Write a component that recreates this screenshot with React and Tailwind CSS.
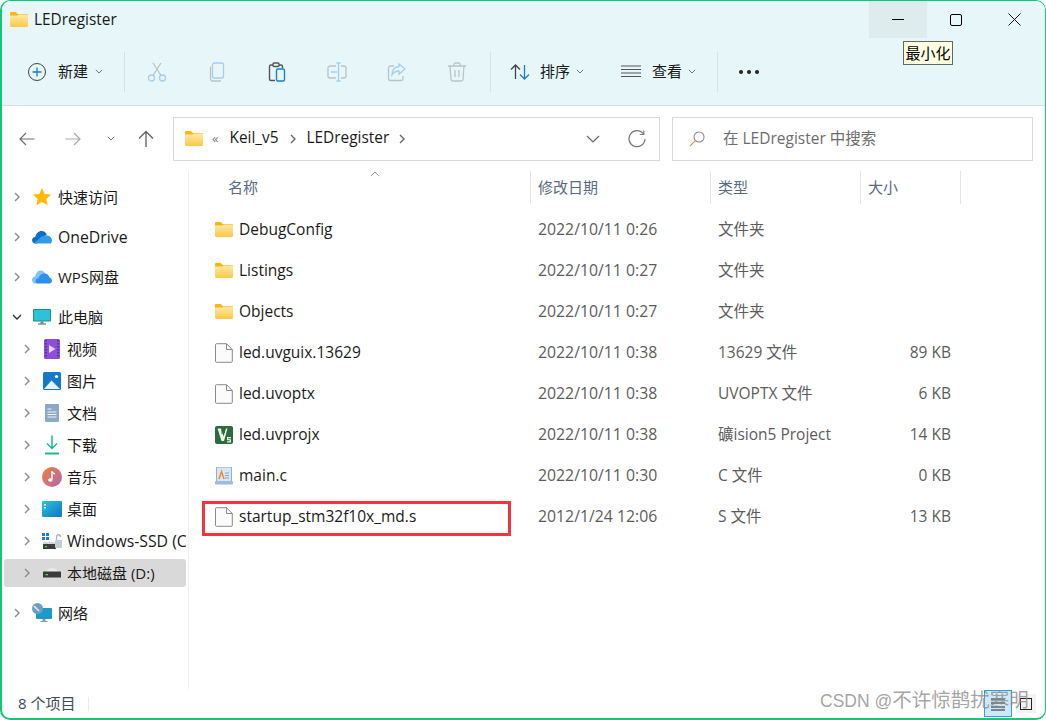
const FONT = "font-['Open_Sans','Noto_Sans_CJK_SC',sans-serif]";

function FolderIcon({ className = "w-[18px] h-[15px]" }) {
  return (
    <svg viewBox="0 0 18 15" className={className}>
      <defs>
        <linearGradient id="folderBody" x1="0" y1="0" x2="0" y2="1">
          <stop offset="0" stopColor="#ffe9a6" />
          <stop offset="1" stopColor="#fbc847" />
        </linearGradient>
      </defs>
      <path d="M0 1.200C0 .5.5 0 1.200 0h4.600l2 2H18v3H0z" fill="#fdb515" />
      <path d="M0 3.600h7.200L9 2.600h9v11.200c0 .7-.5 1.200-1.200 1.200H1.200C.5 15 0 14.500 0 13.800z" fill="url(#folderBody)" />
    </svg>
  );
}

function FileIcon() {
  return (
    <svg viewBox="0 0 18 20" className="w-[18px] h-[20px]">
      <path d="M1.500 .7h10l5.800 5.800v11.800c0 .6-.4 1-1 1H1.500c-.6 0-1-.4-1-1V1.700c0-.6.4-1 1-1z" fill="#fbfbfb" stroke="#8a8a8a" />
      <path d="M11.500 .7v5.800h5.800" fill="none" stroke="#8a8a8a" />
    </svg>
  );
}

function KeilIcon() {
  return (
    <svg viewBox="0 0 18 18" className="w-[18px] h-[18px]">
      <rect width="18" height="18" rx="2" fill="#2e6b3c" />
      <path d="M2.500 2.500h3.500l2.500 8 2.500-8h1.500l-3.500 12.500H6.500z" fill="#eef5e8" />
      <path d="M7 3v5M9.500 3v4" stroke="#2e6b3c" strokeWidth="1" />
      <path d="M12 11h4v1.200h-2.800v1h2.800v3.300h-4v-1.200h2.800v-1H12z" fill="#eef5e8" />
    </svg>
  );
}

function CFileIcon() {
  return (
    <svg viewBox="0 0 18 18" className="w-[18px] h-[18px]">
      <rect x="1.500" y="0" width="15" height="15" fill="#d7e6f5" stroke="#8fb0d2" />
      <rect x="0" y="14" width="18" height="3.500" rx="1" fill="#9fbcdc" />
      <path d="M4 12L6.500 4.500 9 12" fill="none" stroke="#f08a2c" strokeWidth="1.500" />
      <path d="M10 6h4M10 8.500h4M10 11h4" stroke="#89a7c7" />
    </svg>
  );
}

function Chevron({ open, dim }) {
  return (
    <svg viewBox="0 0 10 10" className="w-[10px] h-[10px]">
      <path
        d={open ? "M1 3l4 4 4-4" : "M3 1l4 4-4 4"}
        fill="none"
        stroke={open ? "#333" : dim || "#8a8a8a"}
        strokeWidth="1.400"
      />
    </svg>
  );
}

function SmallChevron() {
  return (
    <svg viewBox="0 0 8 5" className="w-[8px] h-[5px]">
      <path d="M.8.8L4 4 7.200.8" fill="none" stroke="#777" />
    </svg>
  );
}

function Stroke({ w = 20, h = 20, vb = "0 0 20 20", children }) {
  return (
    <svg viewBox={vb} style={{ width: w, height: h }} fill="none">
      {children}
    </svg>
  );
}

const toolbarIcons = [
  <Stroke key="cut">
    <circle cx="4.500" cy="16" r="3" stroke="#a6cdea" strokeWidth="1.300" />
    <circle cx="15.500" cy="16" r="3" stroke="#a6cdea" strokeWidth="1.300" />
    <path d="M6 13.500L14 1M14 13.500L6 1" stroke="#b9c4c8" strokeWidth="1.300" />
  </Stroke>,
  <Stroke key="copy">
    <rect x="5.500" y="1" width="11" height="15" rx="2" stroke="#a6cdea" strokeWidth="1.300" />
    <path d="M3.500 4.500v12c0 1.500 1 2.500 2.500 2.500h8" stroke="#b9c4c8" strokeWidth="1.300" />
  </Stroke>,
  <Stroke key="paste">
    <path d="M8 18.500H4c-1 0-1.500-.6-1.500-1.500V4.500c0-1 .6-1.500 1.500-1.500h10c1 0 1.500.6 1.500 1.500V6" stroke="#555" strokeWidth="1.400" />
    <rect x="6" y="1" width="6" height="3.500" rx="1" fill="#e7f6f8" stroke="#555" strokeWidth="1.400" />
    <rect x="9.500" y="7" width="8" height="12" rx="1.500" fill="#e7f6f8" stroke="#1a7fd4" strokeWidth="1.400" />
  </Stroke>,
  <Stroke key="rename">
    <path d="M9 4H3C2 4 1 5 1 6v8c0 1 1 2 2 2h6M14 4h3c1 0 2 1 2 2v8c0 1-1 2-2 2h-3" stroke="#b9c4c8" strokeWidth="1.300" />
    <path d="M4 10h6" stroke="#a6cdea" strokeWidth="1.600" />
    <path d="M11.500 1v18M9.500 1h4M9.500 19h4" stroke="#a6cdea" strokeWidth="1.300" />
  </Stroke>,
  <Stroke key="share">
    <path d="M7 4H3.500C2.500 4 1.500 5 1.500 6v10.500c0 1 1 2 2 2H14c1 0 2-1 2-2V14" stroke="#b9c4c8" strokeWidth="1.300" />
    <path d="M12 2l6 5-6 5V9C8.500 9 6.500 10.500 5 13c0-5 3-8 7-8.500z" stroke="#a6cdea" strokeWidth="1.300" />
  </Stroke>,
  <Stroke key="delete">
    <path d="M1 4h18M7 4V2.500C7 1.500 7.500 1 8.500 1h3c1 0 1.500.5 1.500 1.500V4" stroke="#b9c4c8" strokeWidth="1.300" />
    <path d="M3 4l1 13.500c0 1 1 1.500 2 1.500h8c1 0 2-.5 2-1.500L17 4" stroke="#b9c4c8" strokeWidth="1.300" />
    <path d="M8 8v7M12 8v7" stroke="#b9c4c8" strokeWidth="1.300" />
  </Stroke>,
];

const navGroups = [
  {
    items: [
      {
        label: "快速访问",
        icon: (
          <svg viewBox="0 0 20 20" className="w-5 h-5">
            <path d="M10 1l2.700 5.900 6.300.7-4.700 4.300 1.300 6.300L10 15.100l-5.600 3.100 1.300-6.300L1 7.600l6.300-.7z" fill="#ffb900" />
          </svg>
        ),
      },
    ],
  },
  {
    items: [
      {
        label: "OneDrive",
        wide: true,
        icon: (
          <svg viewBox="0 0 20 14" className="w-5 h-[14px]">
            <path d="M3.500 13.500C1.500 13.500 0 12 0 10.200 0 8.300 1.500 7 3.200 7 4 3.500 6.500 1 9.500 1c2.600 0 4.500 1.500 5.300 3.800L8 9l-3 4.500z" fill="#0f6fc6" />
            <path d="M14.500 5.500c3 0 5.500 2.200 5.500 5 0 1-.5 2-1 3H4c-1 0-1.500-.3-2-.6l7-5.900c1.500-1 3.500-1.500 5.500-1.500z" fill="#2d9be8" />
          </svg>
        ),
      },
    ],
  },
  {
    items: [
      {
        label: "WPS网盘",
        icon: (
          <svg viewBox="0 0 20 14" className="w-5 h-[14px]">
            <path d="M3.500 13.500C1.500 13.500 0 12 0 10c0-1.900 1.500-3.300 3.200-3.500C4 3 6 .5 8.500.5c2.300 0 4 1.500 4.800 3.500L6 13.500z" fill="#7ec2f7" />
            <path d="M6 13.500c-1.500 0-2.500-1-2.500-2.500S5 8.300 6.500 8.300C7 6 9.500 3.500 12.500 3.500c2.700 0 4.500 1.800 5 4 1.300.3 2.500 1.500 2.500 3 0 1.700-1.300 3-3 3z" fill="#2f8fee" />
          </svg>
        ),
      },
    ],
  },
  {
    items: [
      {
        label: "此电脑",
        open: true,
        icon: (
          <svg viewBox="0 0 18 16" className="w-[18px] h-4">
            <rect width="18" height="12.500" rx="1" fill="#1a8aa8" />
            <rect x="1" y="1" width="16" height="10.500" fill="#2cc3d8" />
            <path d="M7.500 12.500h3v2h-3z" fill="#6a8a96" />
            <path d="M5 14.500h8v1H5z" fill="#4a5a66" />
          </svg>
        ),
      },
      {
        label: "视频",
        sub: true,
        icon: (
          <svg viewBox="0 0 16 20" className="w-4 h-5">
            <rect width="16" height="20" rx="1.500" fill="#8e4fd8" />
            <path d="M2 1v18M14 1v18" stroke="#4d2a80" strokeWidth="1.500" strokeDasharray="1.500 1.500" />
            <path d="M5 6l6.500 4L5 14z" fill="#e3d2fa" />
          </svg>
        ),
      },
      {
        label: "图片",
        sub: true,
        icon: (
          <svg viewBox="0 0 18 18" className="w-[18px] h-[18px]">
            <rect width="18" height="18" rx="1.500" fill="#1678c8" />
            <circle cx="13.500" cy="4.500" r="1.600" fill="#fff" />
            <path d="M1 17l7.500-8.500L17 17z" fill="#e9f3fb" />
          </svg>
        ),
      },
      {
        label: "文档",
        sub: true,
        icon: (
          <svg viewBox="0 0 14 18" className="w-[14px] h-[18px]">
            <rect width="14" height="18" rx="1" fill="#8da8c4" />
            <path d="M2.500 5h4M2.500 8h9M2.500 10.500h9M2.500 13h9" stroke="#eef3f8" />
          </svg>
        ),
      },
      {
        label: "下载",
        sub: true,
        icon: (
          <svg viewBox="0 0 14 20" className="w-[14px] h-5">
            <path d="M7 .5v13M2 8.500l5 5 5-5" fill="none" stroke="#1bb89a" strokeWidth="1.500" />
            <path d="M0 18.500h14" stroke="#1bb89a" strokeWidth="1.800" />
          </svg>
        ),
      },
      {
        label: "音乐",
        sub: true,
        icon: (
          <svg viewBox="0 0 20 20" className="w-5 h-5">
            <defs>
              <linearGradient id="musicFill" x1="0" y1="0" x2="1" y2="1">
                <stop offset="0" stopColor="#ee7f3d" />
                <stop offset="1" stopColor="#b766b2" />
              </linearGradient>
            </defs>
            <circle cx="10" cy="10" r="10" fill="url(#musicFill)" />
            <path d="M10 4.500v8" stroke="#fff" strokeWidth="1.400" />
            <path d="M10 4.500c.5 1.500 2 2 3 2.500" fill="none" stroke="#fff" strokeWidth="1.400" />
            <ellipse cx="8.300" cy="13" rx="2.200" ry="1.800" fill="#fff" />
          </svg>
        ),
      },
      {
        label: "桌面",
        sub: true,
        icon: (
          <svg viewBox="0 0 20 16" className="w-5 h-4">
            <defs>
              <linearGradient id="deskFill" x1="0" y1="0" x2="1" y2="1">
                <stop offset="0" stopColor="#2bc4dc" />
                <stop offset="1" stopColor="#0f75c4" />
              </linearGradient>
            </defs>
            <rect width="20" height="16" rx="1" fill="url(#deskFill)" />
            <path d="M2 3h2v1.500H2zM2 6h2v1.500H2z" fill="#fff" />
          </svg>
        ),
      },
      {
        label: "Windows-SSD (C",
        sub: true,
        wide: true,
        icon: (
          <svg viewBox="0 0 20 17" className="w-5 h-[17px]">
            <path d="M0 0h3v3H0zM4 0h3v3H4zM0 4h3v3H0zM4 4h3v3H4z" fill="#1a7fd4" />
            <path d="M1 9h12v3H1z" fill="#d5d5d5" />
            <rect x="1" y="11" width="13" height="5" rx=".5" fill="#3c3c3c" />
            <path d="M3 13h2v1.200H3z" fill="#5fd35f" />
            <rect x="13" y="7" width="7" height="8" rx="1" fill="#c5ced6" />
            <path d="M14.500 7V4c0-3 4-3 4 0" fill="none" stroke="#aab5bf" strokeWidth="1.300" />
          </svg>
        ),
      },
      {
        label: "本地磁盘 (D:)",
        sub: true,
        selected: true,
        icon: (
          <svg viewBox="0 0 18 10" className="w-[18px] h-[10px]">
            <path d="M3 4C4 1 6 0 9 0s5 1 6 4z" fill="#e8e8e8" />
            <rect y="3.500" width="18" height="6" rx=".5" fill="#3a3a3a" />
            <path d="M2.500 6h2.500v1.200H2.500z" fill="#5fd35f" />
          </svg>
        ),
      },
    ],
  },
  {
    items: [
      {
        label: "网络",
        icon: (
          <svg viewBox="0 0 20 20" className="w-5 h-5">
            <rect x="4" y="5" width="16" height="11" rx="1" fill="#1c9ac8" />
            <path d="M10.500 16h3v2h-3zM8.500 18h7v1h-7z" fill="#8a9aa6" />
            <circle cx="5.500" cy="5.500" r="5.500" fill="#6f9fc6" />
            <path d="M2 3l5 5" stroke="#e6f0f8" strokeWidth="1.500" />
          </svg>
        ),
      },
    ],
  },
];

const columns = [
  { label: "修改日期", x: "w-[180px]" },
  { label: "类型", x: "w-[150px]" },
  { label: "大小", x: "w-[100px]" },
];

const files = [
  { name: "DebugConfig", date: "2022/10/11 0:26", type: "文件夹", size: "", icon: <FolderIcon /> },
  { name: "Listings", date: "2022/10/11 0:27", type: "文件夹", size: "", icon: <FolderIcon /> },
  { name: "Objects", date: "2022/10/11 0:27", type: "文件夹", size: "", icon: <FolderIcon /> },
  { name: "led.uvguix.13629", date: "2022/10/11 0:38", type: "13629 文件", size: "89 KB", icon: <FileIcon /> },
  { name: "led.uvoptx", date: "2022/10/11 0:38", type: "UVOPTX 文件", size: "6 KB", icon: <FileIcon /> },
  { name: "led.uvprojx", date: "2022/10/11 0:38", type: "礦ision5 Project", size: "14 KB", icon: <KeilIcon /> },
  { name: "main.c", date: "2022/10/11 0:30", type: "C 文件", size: "0 KB", icon: <CFileIcon /> },
  { name: "startup_stm32f10x_md.s", date: "2012/1/24 12:06", type: "S 文件", size: "13 KB", icon: <FileIcon />, marked: true },
];

function NavRow({ item }) {
  return (
    <div className="h-8 flex items-center">
      <div
        className={`flex items-center h-7 w-[182px] rounded-[3px] ml-[2px] overflow-hidden ${item.sub ? "pl-[10px]" : ""} ${
          item.selected ? "bg-[#d9d9d9]" : ""
        }`}
      >
        <div className="w-[10px] flex justify-center ml-[8px]">
          <Chevron open={item.open} />
        </div>
        <div className="w-[22px] flex justify-center ml-[9px] shrink-0">{item.icon}</div>
        <span
          className={`whitespace-nowrap text-[#1a1a1a] ${item.sub ? "ml-[4px]" : "ml-[5px]"} ${
            item.wide ? "text-[15.8px] mt-[2px]" : "text-[15px]"
          }`}
        >
          {item.label}
        </span>
      </div>
    </div>
  );
}

function FileRow({ file }) {
  return (
    <div className="relative h-[41px] flex items-center">
      {file.marked && (
        <div className="absolute left-[13px] top-[5px] w-[309px] h-[35px] border-[3px] border-[#f5333a]" />
      )}
      <div className="w-[26px] ml-[26px] flex justify-start">{file.icon}</div>
      <div className="w-[299px] ml-[-2px] text-[15.5px] text-[#1a1a1a] whitespace-nowrap">{file.name}</div>
      <div className="w-[180px] text-[15.8px] text-[#5c5c5c]">{file.date}</div>
      <div className="w-[150px] text-[15.5px] text-[#5c5c5c] whitespace-nowrap">{file.type}</div>
      <div className="w-[83px] text-right text-[15.5px] text-[#5c5c5c]">{file.size}</div>
    </div>
  );
}

export default function App() {
  return (
    <div className={`relative w-[1046px] h-[720px] overflow-hidden bg-white ${FONT}`}>
      <div className="h-full flex flex-col border-2 border-t-[1.5px] border-r-[1px] border-[#0fc878] rounded-[10px] overflow-hidden">
        {/* title bar + toolbar */}
        <div className="bg-[#e7f6f8] border-b border-[#d7e0e2] h-[105px] shrink-0">
          <div className="h-[37px] flex items-center">
            <div className="ml-[8px]">
              <FolderIcon />
            </div>
            <span className="ml-[6px] text-[15.4px] text-[#1a1a1a]">LEDregister</span>
            <div className="ml-auto flex h-full mr-[2px]">
              <div className="w-[58px] flex items-center justify-center bg-[#deecee]">
                <div className="w-3 h-px bg-black" />
              </div>
              <div className="w-[58px] flex items-center justify-center">
                <div className="w-[12px] h-[12px] border border-black rounded-[2px]" />
              </div>
              <div className="w-[58px] flex items-center justify-center">
                <Stroke w={13} h={13} vb="0 0 13 13">
                  <path d="M.5.500l12 12M12.500.500l-12 12" stroke="#111" />
                </Stroke>
              </div>
            </div>
          </div>
          <div className="h-[67px] flex items-center text-[#1a1a1a] text-[15px]">
            <div className="ml-[26px] w-[18px] h-[18px] rounded-full border-[1.500px] border-[#444] flex items-center justify-center">
              <Stroke w={10} h={10} vb="0 0 10 10">
                <path d="M5 .5v9M.5 5h9" stroke="#1a7fd4" strokeWidth="1.300" />
              </Stroke>
            </div>
            <span className="ml-[12px]">新建</span>
            <div className="ml-[7px] flex">
              <SmallChevron />
            </div>
            <div className="ml-[21px] w-px h-10 bg-[#d7e2e4]" />
            <div className="ml-[2px] flex">
              {toolbarIcons.map((icon, i) => (
                <div key={i} className="w-[60px] flex justify-center">
                  {icon}
                </div>
              ))}
            </div>
            <div className="ml-[3px] w-px h-10 bg-[#d7e2e4]" />
            <div className="ml-[19px] flex">
              <Stroke>
                <path d="M5.500 17V3M1 7.500l4.500-4.500L10 7.500" stroke="#444" strokeWidth="1.300" />
                <path d="M14.500 3v14M10 12.500l4.500 4.500 4.500-4.500" stroke="#1a7fd4" strokeWidth="1.300" />
              </Stroke>
            </div>
            <span className="ml-[10px]">排序</span>
            <div className="ml-[6px] flex">
              <SmallChevron />
            </div>
            <div className="ml-[37px] flex">
              <Stroke>
                <path d="M0 4h20M0 7.500h20M0 11h20M0 14.500h20" stroke="#555" />
              </Stroke>
            </div>
            <span className="ml-[11px]">查看</span>
            <div className="ml-[6px] flex">
              <SmallChevron />
            </div>
            <div className="ml-[21px] w-px h-10 bg-[#d7e2e4]" />
            <div className="ml-[21px] flex gap-[4px]">
              <div className="w-[4px] h-[4px] rounded-full bg-[#222]" />
              <div className="w-[4px] h-[4px] rounded-full bg-[#222]" />
              <div className="w-[4px] h-[4px] rounded-full bg-[#222]" />
            </div>
          </div>
        </div>

        {/* address row */}
        <div className="h-[65px] shrink-0 flex items-center">
          <div className="ml-[17px] flex">
            <Stroke w={16} h={16} vb="0 0 16 16">
              <path d="M15.500 8H1M7 2L1 8l6 6" stroke="#707070" strokeWidth="1.200" />
            </Stroke>
          </div>
          <div className="ml-[30px] flex">
            <Stroke w={16} h={16} vb="0 0 16 16">
              <path d="M.5 8H15M9 2l6 6-6 6" stroke="#a8a8a8" strokeWidth="1.200" />
            </Stroke>
          </div>
          <div className="ml-[26px] flex">
            <SmallChevron />
          </div>
          <div className="ml-[22px] flex">
            <Stroke w={18} h={18} vb="0 0 18 18">
              <path d="M9 17V1.500M2 8.500l7-7 7 7" stroke="#606060" strokeWidth="1.300" />
            </Stroke>
          </div>
          <div className="ml-[18px] w-[487px] h-[44px] border border-[#d9d9d9] flex items-center">
            <div className="ml-[11px]">
              <FolderIcon />
            </div>
            <span className="ml-[9px] text-[13px] text-[#777]">«</span>
            <span className="ml-[11px] mb-[2px] text-[15.4px] text-[#1a1a1a]">Keil_v5</span>
            <div className="ml-[9px] flex">
              <Chevron dim="#666" />
            </div>
            <span className="ml-[9px] mb-[2px] text-[15.4px] text-[#1a1a1a]">LEDregister</span>
            <div className="ml-[8px] flex">
              <Chevron dim="#666" />
            </div>
            <div className="ml-auto flex">
              <Stroke w={14} h={8} vb="0 0 14 8">
                <path d="M1 1l6 6 6-6" stroke="#666" strokeWidth="1.200" />
              </Stroke>
            </div>
            <div className="ml-[28px] mr-[13px] flex">
              <Stroke w={18} h={18} vb="0 0 18 18">
                <path d="M15.500 4A8 8 0 1 0 17 9" stroke="#777" strokeWidth="1.200" />
                <path d="M15.800.5V4.500h-4" stroke="#777" strokeWidth="1.200" />
              </Stroke>
            </div>
          </div>
          <div className="ml-[12px] w-[361px] h-[44px] border border-[#d9d9d9] flex items-center">
            <div className="ml-[16px] flex">
              <Stroke w={16} h={16} vb="0 0 16 16">
                <circle cx="10" cy="6" r="5" stroke="#8a8a8a" strokeWidth="1.100" />
                <path d="M6.400 9.600L.8 15.200" stroke="#c8905a" strokeWidth="1.100" />
              </Stroke>
            </div>
            <span className="ml-[18px] text-[15.5px] text-[#6d6d6d]">在 LEDregister 中搜索</span>
          </div>
        </div>

        {/* main */}
        <div className="flex-1 min-h-0 flex">
          <div className="w-[187px] shrink-0 border-r border-[#f0f0f0] pt-[10px]">
            {navGroups.map((group, i) => (
              <div key={i} className="mb-2">
                {group.items.map((item) => (
                  <NavRow key={item.label} item={item} />
                ))}
              </div>
            ))}
          </div>
          <div className="flex-1 min-w-0 flex flex-col">
            <div className="h-[33px] flex text-[15px] text-[#5a6a80]">
              <div className="relative w-[342px] border-r border-[#e5e5e5] pl-[39px] flex items-center">
                名称
                <div className="absolute left-[181px] top-0">
                  <Stroke w={10} h={6} vb="0 0 10 6">
                    <path d="M.8 5L5 1l4.200 4" stroke="#999" />
                  </Stroke>
                </div>
              </div>
              {columns.map((c) => (
                <div key={c.label} className={`${c.x} border-r border-[#e5e5e5] pl-[7px] flex items-center`}>
                  {c.label}
                </div>
              ))}
            </div>
            <div className="pt-[5px]">
              {files.map((f) => (
                <FileRow key={f.name} file={f} />
              ))}
            </div>
          </div>
        </div>

        {/* status bar */}
        <div className="h-[29px] shrink-0 flex items-center relative">
          <span className="ml-[16px] text-[15px] text-[#3c4a5c]">8 个项目</span>
          <div className="ml-[13px] w-px h-[14px] bg-[#ececec]" />
          <div className="ml-auto mr-[9px] flex items-center gap-[4px]">
            <div className="w-[28px] h-[27px] bg-[#cde8f7] border border-[#2ba1e0] flex items-center justify-center">
              <Stroke w={16} h={14} vb="0 0 16 14">
                <path d="M1 2h14M1 6h14M1 10h14M1 13h14" stroke="#222" />
              </Stroke>
            </div>
            <div className="w-[20px] h-[19px] bg-[#f2f2f2] flex items-center justify-center">
              <div className="w-[12px] h-[12px] border border-[#222]" />
            </div>
          </div>
        </div>
      </div>

      {/* tooltip */}
      <div className="absolute left-[903px] top-[41px] w-[50px] h-[24px] bg-[#ffffe1] border border-[#646464] flex items-center justify-center text-[15px] text-black whitespace-nowrap">
        最小化
      </div>

      {/* watermark */}
      <div className="absolute left-[820px] top-[688px] text-[17.500px] leading-[24px] text-[#8c8c8c]/80 whitespace-nowrap font-['Liberation_Sans','Noto_Sans_CJK_SC',sans-serif]">
        CSDN @<span className="text-[19.500px]">不许惊鹊扰寒明</span>
      </div>
    </div>
  );
}
